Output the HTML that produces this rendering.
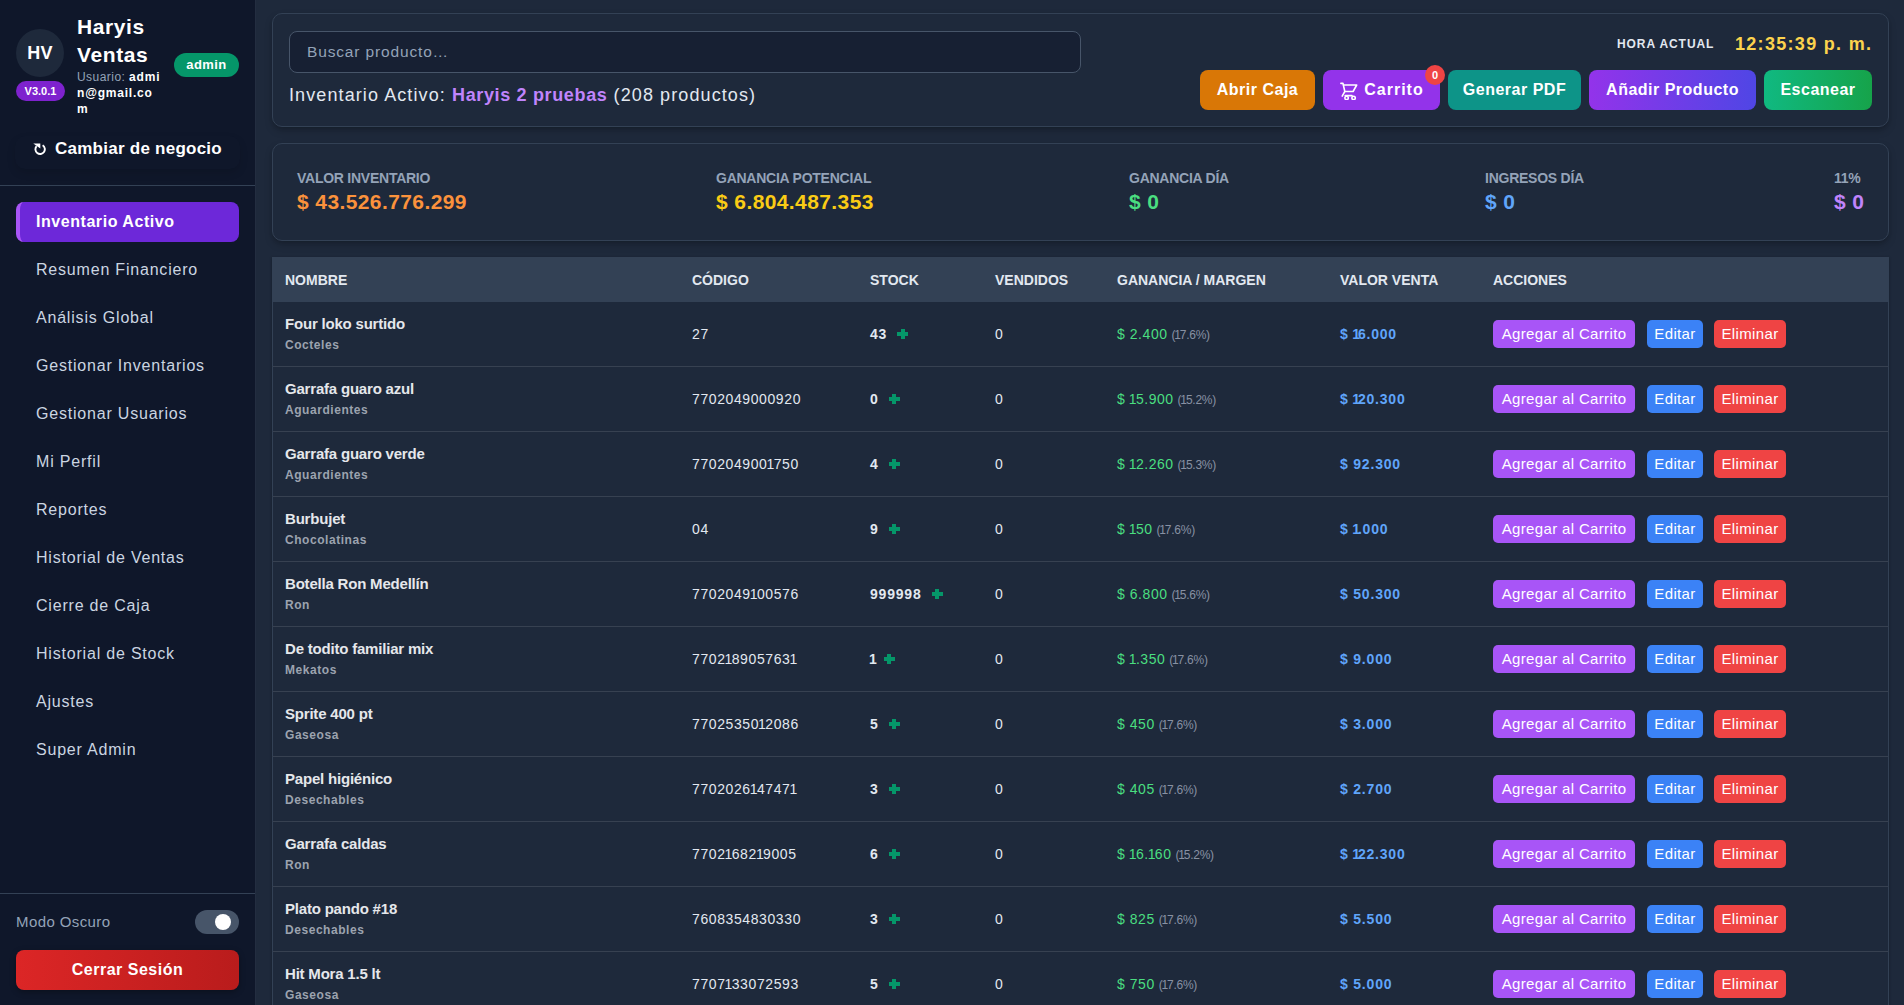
<!DOCTYPE html>
<html><head><meta charset="utf-8">
<style>
*{box-sizing:border-box;margin:0;padding:0}
html,body{width:1904px;height:1005px;overflow:hidden;background:#1e293b;font-family:"Liberation Sans",sans-serif;color:#e2e8f0}
.abs{position:absolute}
#side{position:absolute;left:0;top:0;width:255px;height:1005px;background:#0f172a;box-shadow:1px 0 0 #232d40}
.avatar{position:absolute;left:16px;top:29px;width:48px;height:48px;border-radius:50%;background:#1e293b;color:#fff;font-weight:bold;font-size:18px;letter-spacing:0.3px;display:flex;align-items:center;justify-content:center}
.ver{position:absolute;left:16px;top:81px;width:49px;height:20px;border-radius:10px;background:#7e22ce;color:#fff;font-weight:bold;font-size:11px;display:flex;align-items:center;justify-content:center}
.brand{position:absolute;left:77px;top:13px;font-weight:bold;font-size:21px;line-height:28px;color:#fff;letter-spacing:0.6px}
.user{position:absolute;left:77px;top:69px;font-size:12px;line-height:16px;color:#fff;font-weight:bold;white-space:nowrap;letter-spacing:0.8px}
.user span{color:#94a3b8;font-weight:normal;letter-spacing:0.45px}
.admin{position:absolute;left:174px;top:53px;width:65px;height:24px;border-radius:12px;background:#059669;color:#fff;font-weight:bold;font-size:13px;letter-spacing:0.4px;padding-bottom:2px;display:flex;align-items:center;justify-content:center}
.switch{position:absolute;left:15px;top:136px;width:225px;height:33px;border-radius:10px;background:#0f172a;box-shadow:0 4px 8px rgba(0,0,0,.12)}
.switch .t{position:absolute;left:40px;top:1px;line-height:24px;font-weight:bold;font-size:17px;color:#fff;white-space:nowrap;letter-spacing:0.25px}
.divider{position:absolute;left:0;width:255px;height:1px;background:#334155}
.nav{position:absolute;left:16px;width:223px;height:40px;border-radius:8px;font-size:16px;line-height:40px;padding-left:20px;color:#cbd5e1;white-space:nowrap;letter-spacing:0.8px}
.nav.active{background:#6d28d9;color:#fff;font-weight:bold;border-left:4px solid #a855f7;padding-left:16px;letter-spacing:0.55px}
.modo{position:absolute;left:16px;top:913px;font-size:15px;color:#94a3b8;letter-spacing:0.4px}
.toggle{position:absolute;left:195px;top:910px;width:44px;height:24px;border-radius:12px;background:#475569}
.toggle:after{content:"";position:absolute;left:20px;top:4px;width:16px;height:16px;border-radius:50%;background:#fff}
.logout{position:absolute;left:16px;top:950px;width:223px;height:40px;border-radius:8px;background:linear-gradient(90deg,#dc2626,#b91c1c);color:#fff;font-weight:bold;font-size:16px;letter-spacing:0.5px;display:flex;align-items:center;justify-content:center;box-shadow:0 2px 6px rgba(0,0,0,.3)}

.card{position:absolute;left:272px;width:1617px;border:1px solid #334155;border-radius:10px;background:#1e293b;box-shadow:0 4px 8px -1px rgba(0,0,0,.22),0 2px 4px -1px rgba(0,0,0,.12)}
.search{position:absolute;left:16px;top:17px;width:792px;height:42px;border:1px solid #475569;border-radius:8px;background:#172033;color:#94a3b8;font-size:15.5px;line-height:40px;padding-left:17px;letter-spacing:0.85px}
.invline{position:absolute;left:16px;top:71px;font-size:18px;line-height:20px;color:#e2e8f0;white-space:nowrap;letter-spacing:1.1px}
.invline b{color:#c084fc;letter-spacing:0.65px}
.hora{position:absolute;top:23px;font-size:12px;font-weight:bold;letter-spacing:0.93px;color:#e2e8f0;line-height:14px}
.time{position:absolute;top:20px;font-size:18px;font-weight:bold;letter-spacing:1.3px;color:#fcd34d;line-height:20px}
.btn{position:absolute;top:56px;height:40px;border-radius:8px;color:#fff;font-weight:bold;font-size:16px;display:flex;align-items:center;justify-content:center;white-space:nowrap;letter-spacing:0.5px}
.badge{position:absolute;left:1152px;top:51px;width:20px;height:20px;border-radius:50%;background:#ef4444;color:#fff;font-weight:bold;font-size:11px;display:flex;align-items:center;justify-content:center}

.stat{position:absolute;top:25px}
.stat .l{font-size:14px;font-weight:bold;color:#94a3b8;white-space:nowrap;line-height:18px;letter-spacing:-0.25px}
.stat .v{font-size:21px;font-weight:bold;white-space:nowrap;line-height:24px;margin-top:3px;letter-spacing:0.4px}

#wrap{position:absolute;left:272px;top:257px;width:1617px;box-shadow:0 1px 3px rgba(0,0,0,.3)}
#tbl{width:1617px;border-collapse:separate;border-spacing:0;table-layout:fixed}
#tbl th{background:#334155;height:45px;text-align:left;padding-left:13px;padding-top:1px;font-size:14px;font-weight:bold;color:#e2e8f0;white-space:nowrap}
#tbl td{height:65px;border-bottom:1px solid #374151;padding-left:13px;font-size:14px;color:#e2e8f0;white-space:nowrap;background:#1e293b}
#tbl tbody tr td:first-child{border-left:1px solid #334155;padding-left:12px}
#tbl tbody tr td:last-child{border-right:1px solid #334155}
.nm{font-size:15px;font-weight:bold;color:#e5e7eb;line-height:17px;margin-top:-2px;letter-spacing:-0.2px}
.cat{font-size:12px;font-weight:bold;color:#9ca3af;margin-top:6px;line-height:14px;letter-spacing:0.55px}
.code{letter-spacing:0.6px}
.stk{font-weight:bold;letter-spacing:0.8px}
.n1{font-style:normal;margin-left:-1px;letter-spacing:-0.6px}
.stk .n1{margin-left:-1px;letter-spacing:-3px}
.plus{display:inline-block;vertical-align:middle;margin-left:10px;width:11px;height:10px;position:relative;top:-1px}
.plus:before,.plus:after{content:"";position:absolute;background:#059669}
.plus:before{left:3.5px;top:0;width:4px;height:10px}
.plus:after{left:0;top:3px;width:11px;height:4px}
.g{color:#4ade80;letter-spacing:0.55px}
.g .n1{margin-left:-1px;letter-spacing:-0.65px}
.pct{color:#8891a3;font-size:12px;letter-spacing:-0.25px}
.pct .n1{margin-left:-1px;letter-spacing:-1.15px}
.vv{color:#60a5fa;font-weight:bold;letter-spacing:0.8px}
.vv .n1{margin-left:-1px;letter-spacing:-2.2px}
.ab{display:inline-block;vertical-align:middle;height:28px;line-height:28px;border-radius:5px;color:#fff;font-size:15px;padding:0;letter-spacing:0.35px;text-align:center}
</style></head><body>
<div id="side">
  <div class="avatar">HV</div>
  <div class="ver">V3.0.1</div>
  <div class="brand">Haryis<br>Ventas</div>
  <div class="user"><span>Usuario: </span>admi<br>n@gmail.co<br>m</div>
  <div class="admin">admin</div>
  <div class="switch"><svg class="abs" style="left:18px;top:7px" width="14" height="12" viewBox="0 0 14 12"><path d="M9.6 2.3 A4.7 4.7 0 1 1 3.6 3.2" fill="none" stroke="#fff" stroke-width="1.9"/><path d="M0.3 0.6 L7.3 0.6 L7.3 5.4 Z" fill="#fff"/></svg><span class="t">Cambiar de negocio</span></div>
  <div class="divider" style="top:185px"></div>
  <div class="nav active" style="top:202px">Inventario Activo</div>
  <div class="nav" style="top:250px">Resumen Financiero</div>
  <div class="nav" style="top:298px">Análisis Global</div>
  <div class="nav" style="top:346px">Gestionar Inventarios</div>
  <div class="nav" style="top:394px">Gestionar Usuarios</div>
  <div class="nav" style="top:442px">Mi Perfil</div>
  <div class="nav" style="top:490px">Reportes</div>
  <div class="nav" style="top:538px">Historial de Ventas</div>
  <div class="nav" style="top:586px">Cierre de Caja</div>
  <div class="nav" style="top:634px">Historial de Stock</div>
  <div class="nav" style="top:682px">Ajustes</div>
  <div class="nav" style="top:730px">Super Admin</div>
  <div class="divider" style="top:893px"></div>
  <div class="modo">Modo Oscuro</div>
  <div class="toggle"></div>
  <div class="logout">Cerrar Sesión</div>
</div>

<div class="card" style="top:13px;height:114px">
  <div class="search">Buscar producto…</div>
  <div class="invline">Inventario Activo: <b>Haryis 2 pruebas</b> (208 productos)</div>
  <div class="hora" style="left:1344px">HORA ACTUAL</div>
  <div class="time" style="left:1462px">12:35:39 p. m.</div>
  <div class="btn" style="left:927px;width:115px;background:#d97706">Abrir Caja</div>
  <div class="btn" style="left:1050px;width:117px;background:#9333ea;padding-left:25px;letter-spacing:1px"><svg class="abs" style="left:17px;top:12px" width="18" height="18" viewBox="0 0 18 18" fill="none" stroke="#fff" stroke-width="1.6" stroke-linejoin="round" stroke-linecap="round"><path d="M0.9 1.4 H3 L4.8 9.5 L2.2 14.1"/><path d="M3.5 3 H16.7 L13.1 9.5 H4.8"/><path d="M5.2 13.6 H12"/><circle cx="6.6" cy="15.9" r="1.7"/><circle cx="13.6" cy="15.9" r="1.7"/></svg>Carrito</div>
  <div class="badge">0</div>
  <div class="btn" style="left:1175px;width:133px;background:#0d9488">Generar PDF</div>
  <div class="btn" style="left:1316px;width:167px;background:linear-gradient(90deg,#9333ea,#4f46e5)">Añadir Producto</div>
  <div class="btn" style="left:1491px;width:108px;background:linear-gradient(90deg,#10b981,#16a34a)">Escanear</div>
</div>

<div class="card" style="top:143px;height:98px">
  <div class="stat" style="left:24px"><div class="l">VALOR INVENTARIO</div><div class="v" style="color:#fb923c">$ 43.526.776.299</div></div>
  <div class="stat" style="left:443px"><div class="l">GANANCIA POTENCIAL</div><div class="v" style="color:#facc15">$ 6.804.487.353</div></div>
  <div class="stat" style="left:856px"><div class="l">GANANCIA DÍA</div><div class="v" style="color:#4ade80">$ 0</div></div>
  <div class="stat" style="left:1212px"><div class="l">INGRESOS DÍA</div><div class="v" style="color:#60a5fa">$ 0</div></div>
  <div class="stat" style="left:1561px"><div class="l">11%</div><div class="v" style="color:#c084fc">$ 0</div></div>
</div>

<div id="wrap">
<table id="tbl">
<colgroup><col style="width:407px"><col style="width:178px"><col style="width:125px"><col style="width:122px"><col style="width:223px"><col style="width:153px"><col style="width:409px"></colgroup>
<thead><tr><th>NOMBRE</th><th>CÓDIGO</th><th>STOCK</th><th>VENDIDOS</th><th>GANANCIA / MARGEN</th><th>VALOR VENTA</th><th>ACCIONES</th></tr></thead>
<tbody id="rows">
<tr><td><div class="nm">Four loko surtido</div><div class="cat">Cocteles</div></td><td><span class="code">27</span></td><td><span class="stk">43</span><span class="plus"></span></td><td>0</td><td><span class="g">$ 2.400</span> <span class="pct">(<i class="n1">1</i>7.6%)</span></td><td><span class="vv">$ <i class="n1">1</i>6.000</span></td><td><span class="ab" style="background:#a855f7;width:142px">Agregar al Carrito</span><span class="ab" style="background:#3b82f6;width:56px;margin-left:12px">Editar</span><span class="ab" style="background:#ef4444;width:72px;margin-left:11px">Eliminar</span></td></tr>
<tr><td><div class="nm">Garrafa guaro azul</div><div class="cat">Aguardientes</div></td><td><span class="code">7702049000920</span></td><td><span class="stk">0</span><span class="plus"></span></td><td>0</td><td><span class="g">$ <i class="n1">1</i>5.900</span> <span class="pct">(<i class="n1">1</i>5.2%)</span></td><td><span class="vv">$ <i class="n1">1</i>20.300</span></td><td><span class="ab" style="background:#a855f7;width:142px">Agregar al Carrito</span><span class="ab" style="background:#3b82f6;width:56px;margin-left:12px">Editar</span><span class="ab" style="background:#ef4444;width:72px;margin-left:11px">Eliminar</span></td></tr>
<tr><td><div class="nm">Garrafa guaro verde</div><div class="cat">Aguardientes</div></td><td><span class="code">770204900<i class="n1">1</i>750</span></td><td><span class="stk">4</span><span class="plus"></span></td><td>0</td><td><span class="g">$ <i class="n1">1</i>2.260</span> <span class="pct">(<i class="n1">1</i>5.3%)</span></td><td><span class="vv">$ 92.300</span></td><td><span class="ab" style="background:#a855f7;width:142px">Agregar al Carrito</span><span class="ab" style="background:#3b82f6;width:56px;margin-left:12px">Editar</span><span class="ab" style="background:#ef4444;width:72px;margin-left:11px">Eliminar</span></td></tr>
<tr><td><div class="nm">Burbujet</div><div class="cat">Chocolatinas</div></td><td><span class="code">04</span></td><td><span class="stk">9</span><span class="plus"></span></td><td>0</td><td><span class="g">$ <i class="n1">1</i>50</span> <span class="pct">(<i class="n1">1</i>7.6%)</span></td><td><span class="vv">$ <i class="n1">1</i>.000</span></td><td><span class="ab" style="background:#a855f7;width:142px">Agregar al Carrito</span><span class="ab" style="background:#3b82f6;width:56px;margin-left:12px">Editar</span><span class="ab" style="background:#ef4444;width:72px;margin-left:11px">Eliminar</span></td></tr>
<tr><td><div class="nm">Botella Ron Medellín</div><div class="cat">Ron</div></td><td><span class="code">7702049<i class="n1">1</i>00576</span></td><td><span class="stk">999998</span><span class="plus"></span></td><td>0</td><td><span class="g">$ 6.800</span> <span class="pct">(<i class="n1">1</i>5.6%)</span></td><td><span class="vv">$ 50.300</span></td><td><span class="ab" style="background:#a855f7;width:142px">Agregar al Carrito</span><span class="ab" style="background:#3b82f6;width:56px;margin-left:12px">Editar</span><span class="ab" style="background:#ef4444;width:72px;margin-left:11px">Eliminar</span></td></tr>
<tr><td><div class="nm">De todito familiar mix</div><div class="cat">Mekatos</div></td><td><span class="code">7702<i class="n1">1</i>8905763<i class="n1">1</i></span></td><td><span class="stk"><i class="n1">1</i></span><span class="plus"></span></td><td>0</td><td><span class="g">$ <i class="n1">1</i>.350</span> <span class="pct">(<i class="n1">1</i>7.6%)</span></td><td><span class="vv">$ 9.000</span></td><td><span class="ab" style="background:#a855f7;width:142px">Agregar al Carrito</span><span class="ab" style="background:#3b82f6;width:56px;margin-left:12px">Editar</span><span class="ab" style="background:#ef4444;width:72px;margin-left:11px">Eliminar</span></td></tr>
<tr><td><div class="nm">Sprite 400 pt</div><div class="cat">Gaseosa</div></td><td><span class="code">77025350<i class="n1">1</i>2086</span></td><td><span class="stk">5</span><span class="plus"></span></td><td>0</td><td><span class="g">$ 450</span> <span class="pct">(<i class="n1">1</i>7.6%)</span></td><td><span class="vv">$ 3.000</span></td><td><span class="ab" style="background:#a855f7;width:142px">Agregar al Carrito</span><span class="ab" style="background:#3b82f6;width:56px;margin-left:12px">Editar</span><span class="ab" style="background:#ef4444;width:72px;margin-left:11px">Eliminar</span></td></tr>
<tr><td><div class="nm">Papel higiénico</div><div class="cat">Desechables</div></td><td><span class="code">7702026<i class="n1">1</i>4747<i class="n1">1</i></span></td><td><span class="stk">3</span><span class="plus"></span></td><td>0</td><td><span class="g">$ 405</span> <span class="pct">(<i class="n1">1</i>7.6%)</span></td><td><span class="vv">$ 2.700</span></td><td><span class="ab" style="background:#a855f7;width:142px">Agregar al Carrito</span><span class="ab" style="background:#3b82f6;width:56px;margin-left:12px">Editar</span><span class="ab" style="background:#ef4444;width:72px;margin-left:11px">Eliminar</span></td></tr>
<tr><td><div class="nm">Garrafa caldas</div><div class="cat">Ron</div></td><td><span class="code">7702<i class="n1">1</i>682<i class="n1">1</i>9005</span></td><td><span class="stk">6</span><span class="plus"></span></td><td>0</td><td><span class="g">$ <i class="n1">1</i>6.<i class="n1">1</i>60</span> <span class="pct">(<i class="n1">1</i>5.2%)</span></td><td><span class="vv">$ <i class="n1">1</i>22.300</span></td><td><span class="ab" style="background:#a855f7;width:142px">Agregar al Carrito</span><span class="ab" style="background:#3b82f6;width:56px;margin-left:12px">Editar</span><span class="ab" style="background:#ef4444;width:72px;margin-left:11px">Eliminar</span></td></tr>
<tr><td><div class="nm">Plato pando #18</div><div class="cat">Desechables</div></td><td><span class="code">7608354830330</span></td><td><span class="stk">3</span><span class="plus"></span></td><td>0</td><td><span class="g">$ 825</span> <span class="pct">(<i class="n1">1</i>7.6%)</span></td><td><span class="vv">$ 5.500</span></td><td><span class="ab" style="background:#a855f7;width:142px">Agregar al Carrito</span><span class="ab" style="background:#3b82f6;width:56px;margin-left:12px">Editar</span><span class="ab" style="background:#ef4444;width:72px;margin-left:11px">Eliminar</span></td></tr>
<tr><td><div class="nm">Hit Mora 1.5 lt</div><div class="cat">Gaseosa</div></td><td><span class="code">7707<i class="n1">1</i>33072593</span></td><td><span class="stk">5</span><span class="plus"></span></td><td>0</td><td><span class="g">$ 750</span> <span class="pct">(<i class="n1">1</i>7.6%)</span></td><td><span class="vv">$ 5.000</span></td><td><span class="ab" style="background:#a855f7;width:142px">Agregar al Carrito</span><span class="ab" style="background:#3b82f6;width:56px;margin-left:12px">Editar</span><span class="ab" style="background:#ef4444;width:72px;margin-left:11px">Eliminar</span></td></tr>
</tbody>
</table>
</div>
</body></html>
